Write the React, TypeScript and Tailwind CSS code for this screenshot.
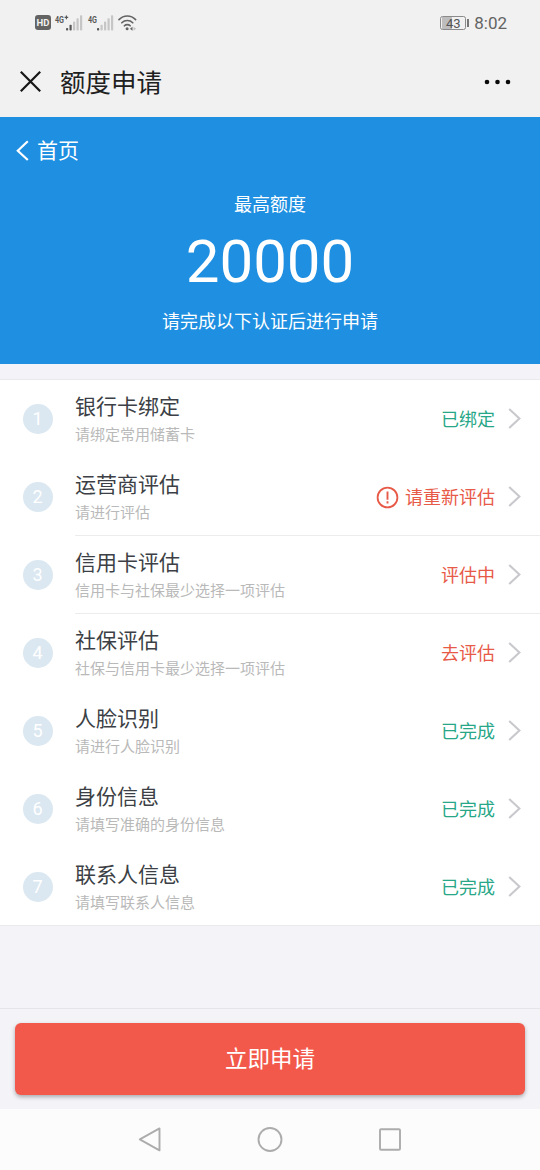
import { clsx } from "clsx";

type Step = {
  title: string;
  desc: string;
  status: string;
  done?: boolean;
  warn?: boolean;
  divider?: boolean;
};

const steps: Step[] = [
  { title: "银行卡绑定", desc: "请绑定常用储蓄卡", status: "已绑定", done: true },
  { title: "运营商评估", desc: "请进行评估", status: "请重新评估", warn: true, divider: true },
  { title: "信用卡评估", desc: "信用卡与社保最少选择一项评估", status: "评估中", divider: true },
  { title: "社保评估", desc: "社保与信用卡最少选择一项评估", status: "去评估" },
  { title: "人脸识别", desc: "请进行人脸识别", status: "已完成", done: true },
  { title: "身份信息", desc: "请填写准确的身份信息", status: "已完成", done: true },
  { title: "联系人信息", desc: "请填写联系人信息", status: "已完成", done: true },
];

const Signal = ({ active }: { active: number }) => (
  <svg width="17" height="16" viewBox="0 0 17 16">
    {[2.6, 5.8, 9, 12.2, 15.2].map((h, i) => (
      <rect
        key={h}
        x={i * 3.5}
        y={15.5 - h}
        width="2.2"
        height={h}
        rx="0.8"
        fill={i < active ? "#585858" : "#c6c6c6"}
      />
    ))}
  </svg>
);

const Wifi = () => (
  <svg width="19" height="16" viewBox="0 0 19 16" fill="none" stroke="#636363" strokeLinecap="round">
    <path d="M1 4.6C5.6-.3 13-.3 17.6 4.6" strokeWidth="1.6" />
    <path d="M3.8 7.8c3-3 8-3 11 0" strokeWidth="1.6" />
    <path d="M6.4 10.8c1.5-1.6 4.2-1.6 5.8 0" strokeWidth="1.6" />
    <circle cx="9.1" cy="13.7" r="1.5" fill="#636363" stroke="none" />
    <path d="M14.5 11.7v4l-2.6-2z" fill="#636363" stroke="none" />
    <path d="M15.5 11.7v4l2.6-2z" fill="#c3c3c3" stroke="none" />
  </svg>
);

const StatusBar = () => (
  <div className="flex h-[46px] items-start justify-between pr-[33px] pl-[35px] font-[Roboto,sans-serif] text-[#636363]">
    <div className="flex pt-[15px]">
      <span className="flex h-[15px] w-4 items-center justify-center rounded-[3px] bg-[#636363] text-[9.5px] leading-none font-bold text-[#f1f1f1]">
        HD
      </span>
      <svg className="-mt-[3px] ml-[3px] overflow-visible" width="15" height="14" viewBox="-1 -2 15 14">
        <text x="0" y="8.5" fontSize="9.5" fontWeight="700" textLength="9" lengthAdjust="spacingAndGlyphs" fill="#585858">4G</text>
        <path d="M11.4 1.6v3.6M9.6 3.4h3.6" stroke="#585858" strokeWidth="1.2" />
      </svg>
      <span className="-ml-[3px]">
        <Signal active={2} />
      </span>
      <svg className="-mt-[3px] ml-1 overflow-visible" width="12" height="14" viewBox="-1 -2 12 14">
        <text x="0" y="8.5" fontSize="9.5" fontWeight="700" textLength="9" lengthAdjust="spacingAndGlyphs" fill="#585858">4G</text>
      </svg>
      <span className="-ml-0.5">
        <Signal active={1} />
      </span>
      <span className="ml-1">
        <Wifi />
      </span>
    </div>
    <div className="flex pt-4">
      <span className="flex h-[14px] w-[26px] items-center justify-center rounded-[2.5px] border border-[#8a8a8a] bg-[linear-gradient(90deg,#f1f1f1_1px,#bdbdbd_1px,#bdbdbd_11px,#f1f1f1_11px)] text-[13px] leading-none text-[#555]">
        43
      </span>
      <span className="mt-[3px] ml-px h-2 w-0.5 bg-[#777]" />
      <span className="-mt-0.5 ml-[5px] text-[17px] leading-[19px]">8:02</span>
    </div>
  </div>
);

const TitleBar = () => (
  <div className="flex h-[71px] items-center pr-[28px] pl-5">
    <svg width="21" height="21" viewBox="0 0 21 21" fill="none" stroke="#161616" strokeWidth="2.2" className="-mt-px">
      <path d="M.8.8l19.4 19.4M20.2.8.8 20.2" />
    </svg>
    <h1 className="-mt-0.5 ml-[19px] flex-1 text-[25.5px] leading-[36px] text-[#202020]">额度申请</h1>
    <svg width="28" height="6" viewBox="0 0 28 6" fill="#0a0a0a">
      <circle cx="3" cy="3" r="2.3" />
      <circle cx="13.5" cy="3" r="2.3" />
      <circle cx="24" cy="3" r="2.3" />
    </svg>
  </div>
);

const Hero = () => (
  <section className="h-[247px] bg-[#1e8fe1] text-white">
    <div className="flex h-[66px] items-center pl-4">
      <svg className="mt-px" width="13" height="21" viewBox="0 0 13 21" fill="none" stroke="#fff" strokeWidth="2.2">
        <path d="M11.8 1.2 1.8 10.7l10 9.3" />
      </svg>
      <span className="-mt-0.5 ml-2 text-[21px] leading-[30px]">首页</span>
    </div>
    <div className="flex flex-col items-center">
      <p className="mt-[7px] text-[18px] leading-[26px]">最高额度</p>
      <p className="mt-[10px] font-[Roboto,sans-serif] text-[60px] leading-[72px]">20000</p>
      <p className="mt-[9px] text-[18px] leading-[26px]">请完成以下认证后进行申请</p>
    </div>
  </section>
);

const StepRow = ({ step, index }: { step: Step; index: number }) => (
  <li className="flex h-[78px] pl-[22.5px] last:h-[77px]">
    <span className="mt-[23.5px] flex size-[30px] shrink-0 items-center justify-center rounded-full bg-[#dbe8f1] font-[Roboto,sans-serif] text-[18px] text-white">
      {index}
    </span>
    <div
      className={clsx(
        "ml-[22.5px] flex flex-1 border-b pr-[19px]",
        step.divider ? "border-[#ececec]" : "border-transparent"
      )}
    >
      <div className="flex-1 pt-[10px]">
        <h2 className="text-[21px] leading-[30px] text-[#3c3f45]">{step.title}</h2>
        <p className="mt-[3px] text-[15px] leading-[22px] text-[#b9b9b9]">{step.desc}</p>
      </div>
      <div
        className={clsx(
          "mt-[25px] flex h-[26px] items-center text-[18px] leading-[26px]",
          step.done ? "text-[#27a787]" : "text-[#e85a48]"
        )}
      >
        {step.warn && (
          <svg className="mt-[2px] mr-[6px]" width="23" height="23" viewBox="0 0 23 23" fill="none" stroke="currentColor">
            <circle cx="11.5" cy="11.5" r="9.9" strokeWidth="1.8" />
            <path d="M11.5 5.5v8.3M11.5 15.3v2.2" strokeWidth="1.9" />
          </svg>
        )}
        {step.status}
      </div>
      <svg className="mt-7 ml-[13px]" width="13" height="21" viewBox="0 0 13 21" fill="none" stroke="#c8c8cd" strokeWidth="2.1">
        <path d="M1.2.9 11.4 10.5 1.2 20.1" />
      </svg>
    </div>
  </li>
);

const NavBar = () => (
  <nav className="flex h-[61px] items-center justify-center gap-[92px] bg-[#fcfcfc]">
    <svg width="28" height="28" viewBox="0 0 28 28" fill="none" stroke="#acacac" strokeWidth="1.9" strokeLinejoin="round">
      <path d="M23.5 2.4v22L3.8 13.3z" />
    </svg>
    <svg width="28" height="28" viewBox="0 0 28 28" fill="none" stroke="#acacac" strokeWidth="1.9">
      <circle cx="14" cy="13.5" r="11.5" />
    </svg>
    <svg width="28" height="28" viewBox="0 0 28 28" fill="none" stroke="#acacac" strokeWidth="1.9">
      <rect x="4" y="3.2" width="20" height="20.5" rx="1" />
    </svg>
  </nav>
);

export default function App() {
  return (
    <div className="flex h-[1170px] w-[540px] flex-col overflow-hidden bg-[#f3f3f8] font-['Noto_Sans_CJK_SC',sans-serif]">
      <header className="bg-[#f1f1f1]">
        <StatusBar />
        <TitleBar />
      </header>
      <Hero />
      <ul className="mt-[15px] border-y border-[#eaeaed] bg-white">
        {steps.map((step, i) => (
          <StepRow key={step.title} step={step} index={i + 1} />
        ))}
      </ul>
      <footer className="mt-auto">
        <div className="border-t border-[#e5e5e8] px-[15px] pt-[14px] pb-[14px]">
          <button className="block h-[72px] w-full rounded-[6px] bg-[#f2594b] pb-[3px] text-[22.5px] text-white shadow-[0_2px_4px_rgba(0,0,0,0.3)]">
            立即申请
          </button>
        </div>
        <NavBar />
      </footer>
    </div>
  );
}
